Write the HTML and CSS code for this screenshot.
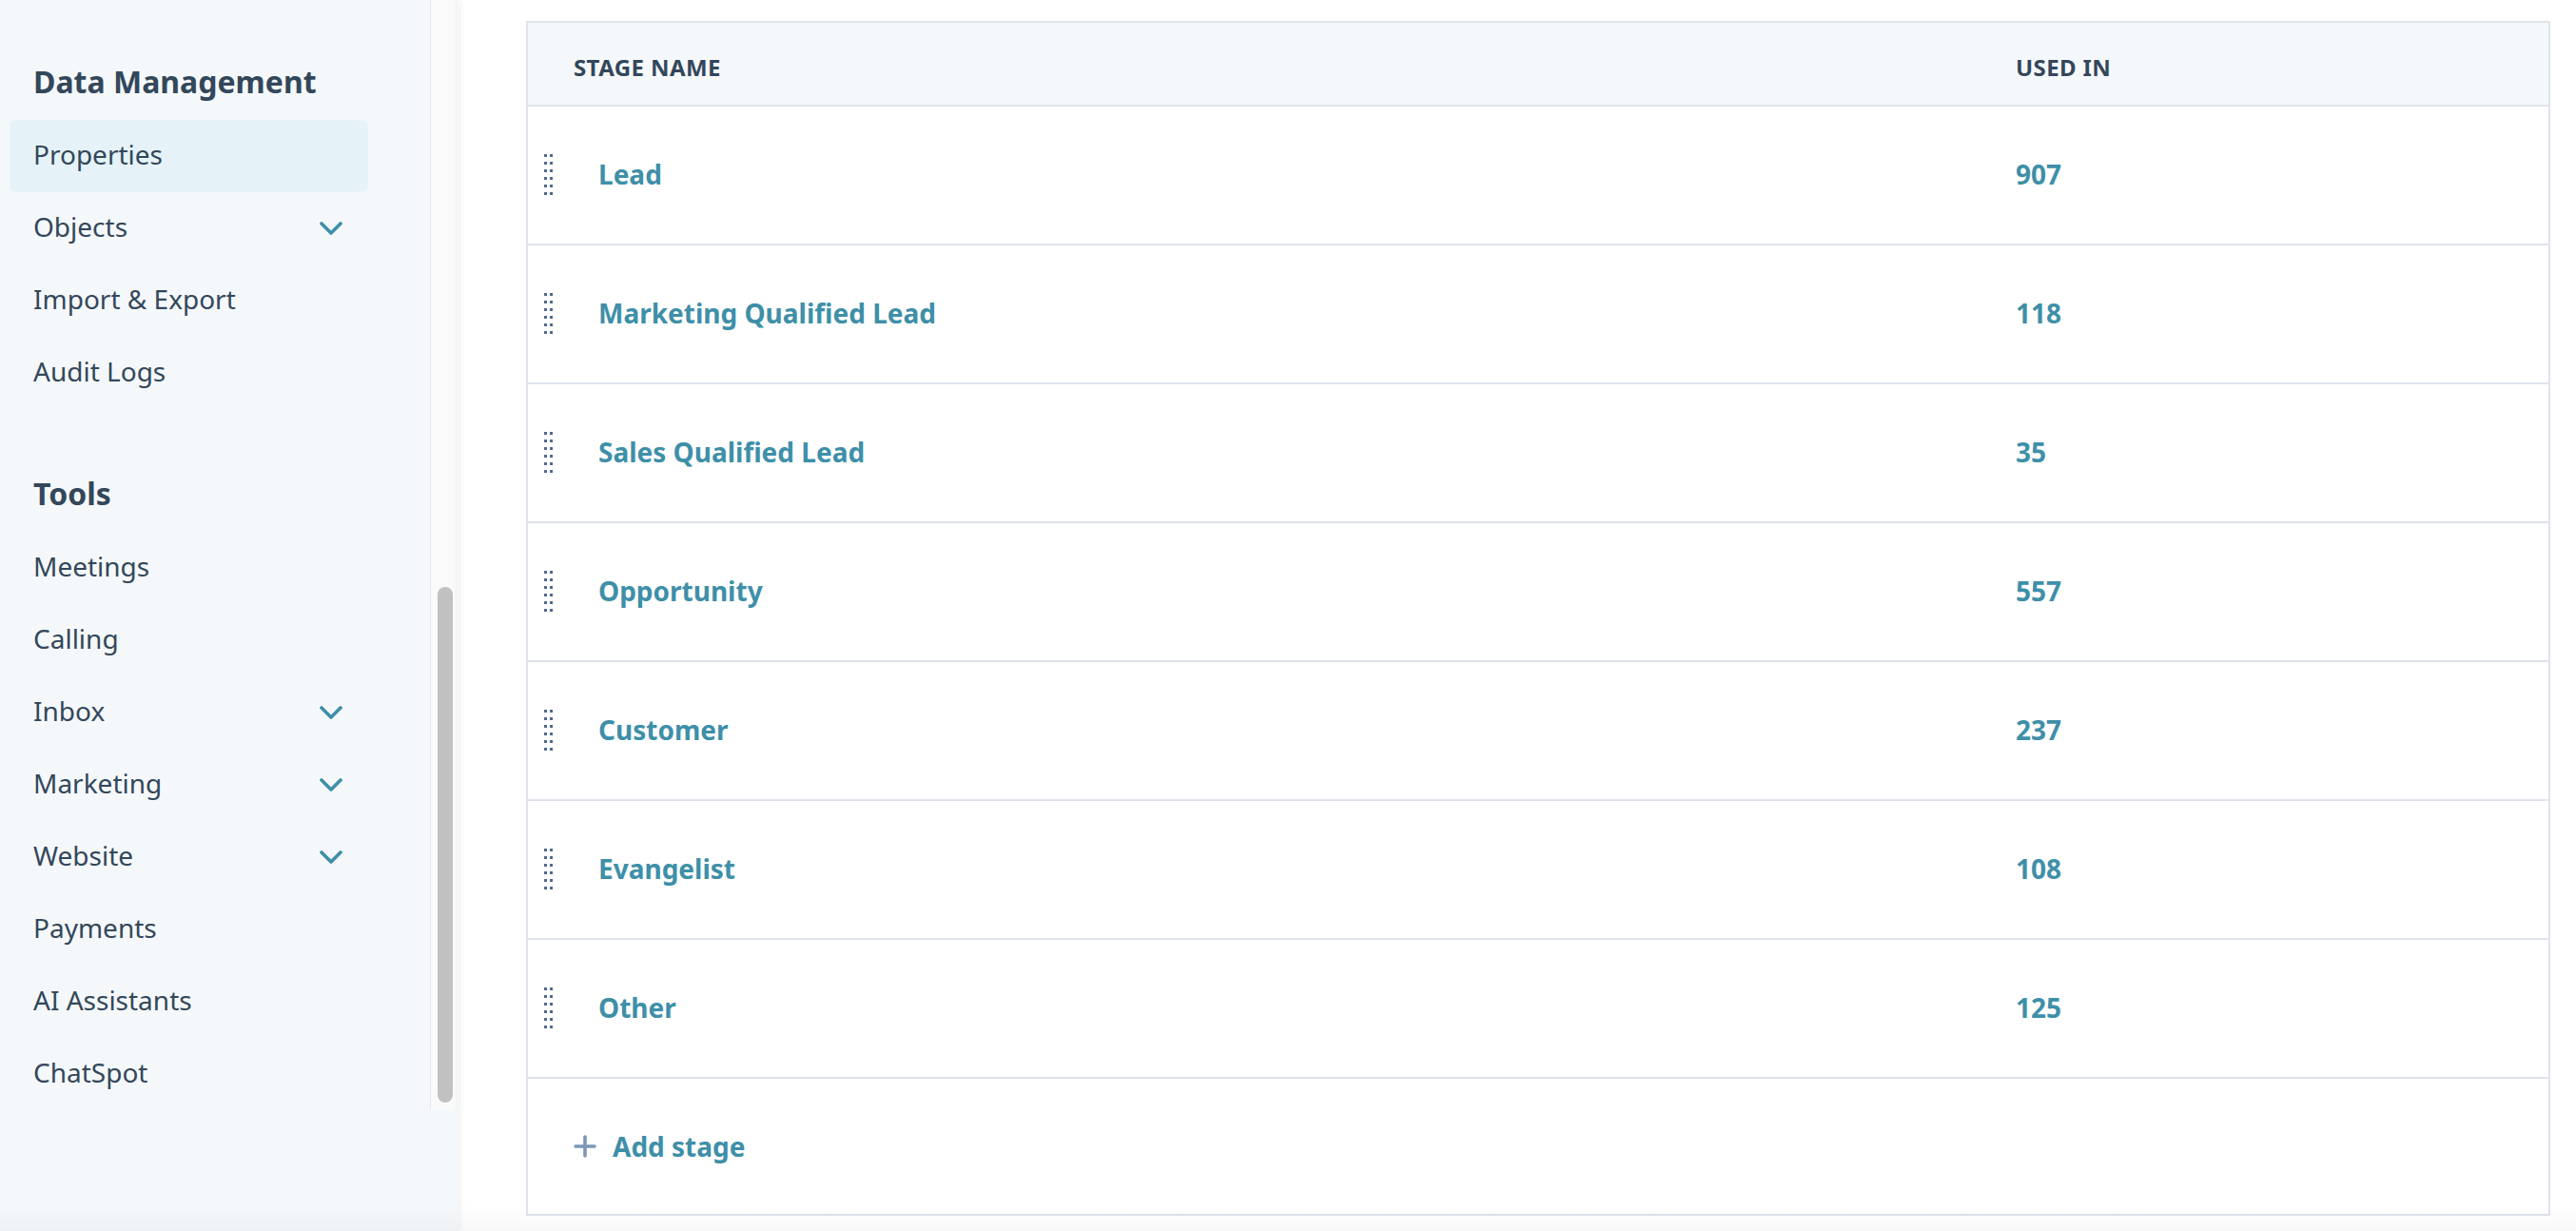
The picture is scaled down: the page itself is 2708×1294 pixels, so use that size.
FILE: index.html
```html
<!DOCTYPE html>
<html lang="en">
<head>
<meta charset="utf-8">
<title>Lifecycle stages</title>
<link rel="stylesheet" href="styles.css">
</head>
<body>
<div class="app">
  <aside class="sidebar">
    <div class="side-scroll">
      <nav class="nav">
        <h3 class="nav-heading">Data Management</h3>
        <ul class="nav-list">
          <li class="nav-item active"><span>Properties</span></li>
          <li class="nav-item"><span>Objects</span><svg class="chev" viewBox="0 0 24 14" width="24" height="14"><polyline points="2,2 12,12 22,2"/></svg></li>
          <li class="nav-item"><span>Import &amp; Export</span></li>
          <li class="nav-item"><span>Audit Logs</span></li>
        </ul>
        <h3 class="nav-heading nav-heading-tools">Tools</h3>
        <ul class="nav-list">
          <li class="nav-item"><span>Meetings</span></li>
          <li class="nav-item"><span>Calling</span></li>
          <li class="nav-item"><span>Inbox</span><svg class="chev" viewBox="0 0 24 14" width="24" height="14"><polyline points="2,2 12,12 22,2"/></svg></li>
          <li class="nav-item"><span>Marketing</span><svg class="chev" viewBox="0 0 24 14" width="24" height="14"><polyline points="2,2 12,12 22,2"/></svg></li>
          <li class="nav-item"><span>Website</span><svg class="chev" viewBox="0 0 24 14" width="24" height="14"><polyline points="2,2 12,12 22,2"/></svg></li>
          <li class="nav-item"><span>Payments</span></li>
          <li class="nav-item"><span>AI Assistants</span></li>
          <li class="nav-item"><span>ChatSpot</span></li>
        </ul>
      </nav>
      <div class="scroll-track"><div class="scroll-thumb"></div></div>
    </div>
  </aside>
  <main class="main">
    <div class="stages">
      <div class="stages-head">
        <div class="head-cell">Stage name</div>
        <div class="head-cell">Used in</div>
      </div>
      <div class="stage-row">
        <div class="name-cell"><svg class="handle" viewBox="0 0 10 44" width="10" height="44"><g><rect x="0" y="0" width="3" height="3"/><rect x="6" y="0" width="3" height="3"/><rect x="0" y="8" width="3" height="3"/><rect x="6" y="8" width="3" height="3"/><rect x="0" y="16" width="3" height="3"/><rect x="6" y="16" width="3" height="3"/><rect x="0" y="24" width="3" height="3"/><rect x="6" y="24" width="3" height="3"/><rect x="0" y="32" width="3" height="3"/><rect x="6" y="32" width="3" height="3"/><rect x="0" y="40" width="3" height="3"/><rect x="6" y="40" width="3" height="3"/></g></svg><span class="stage-link">Lead</span></div>
        <div class="used-cell">907</div>
      </div>
      <div class="stage-row">
        <div class="name-cell"><svg class="handle" viewBox="0 0 10 44" width="10" height="44"><g><rect x="0" y="0" width="3" height="3"/><rect x="6" y="0" width="3" height="3"/><rect x="0" y="8" width="3" height="3"/><rect x="6" y="8" width="3" height="3"/><rect x="0" y="16" width="3" height="3"/><rect x="6" y="16" width="3" height="3"/><rect x="0" y="24" width="3" height="3"/><rect x="6" y="24" width="3" height="3"/><rect x="0" y="32" width="3" height="3"/><rect x="6" y="32" width="3" height="3"/><rect x="0" y="40" width="3" height="3"/><rect x="6" y="40" width="3" height="3"/></g></svg><span class="stage-link">Marketing Qualified Lead</span></div>
        <div class="used-cell">118</div>
      </div>
      <div class="stage-row">
        <div class="name-cell"><svg class="handle" viewBox="0 0 10 44" width="10" height="44"><g><rect x="0" y="0" width="3" height="3"/><rect x="6" y="0" width="3" height="3"/><rect x="0" y="8" width="3" height="3"/><rect x="6" y="8" width="3" height="3"/><rect x="0" y="16" width="3" height="3"/><rect x="6" y="16" width="3" height="3"/><rect x="0" y="24" width="3" height="3"/><rect x="6" y="24" width="3" height="3"/><rect x="0" y="32" width="3" height="3"/><rect x="6" y="32" width="3" height="3"/><rect x="0" y="40" width="3" height="3"/><rect x="6" y="40" width="3" height="3"/></g></svg><span class="stage-link">Sales Qualified Lead</span></div>
        <div class="used-cell">35</div>
      </div>
      <div class="stage-row">
        <div class="name-cell"><svg class="handle" viewBox="0 0 10 44" width="10" height="44"><g><rect x="0" y="0" width="3" height="3"/><rect x="6" y="0" width="3" height="3"/><rect x="0" y="8" width="3" height="3"/><rect x="6" y="8" width="3" height="3"/><rect x="0" y="16" width="3" height="3"/><rect x="6" y="16" width="3" height="3"/><rect x="0" y="24" width="3" height="3"/><rect x="6" y="24" width="3" height="3"/><rect x="0" y="32" width="3" height="3"/><rect x="6" y="32" width="3" height="3"/><rect x="0" y="40" width="3" height="3"/><rect x="6" y="40" width="3" height="3"/></g></svg><span class="stage-link">Opportunity</span></div>
        <div class="used-cell">557</div>
      </div>
      <div class="stage-row">
        <div class="name-cell"><svg class="handle" viewBox="0 0 10 44" width="10" height="44"><g><rect x="0" y="0" width="3" height="3"/><rect x="6" y="0" width="3" height="3"/><rect x="0" y="8" width="3" height="3"/><rect x="6" y="8" width="3" height="3"/><rect x="0" y="16" width="3" height="3"/><rect x="6" y="16" width="3" height="3"/><rect x="0" y="24" width="3" height="3"/><rect x="6" y="24" width="3" height="3"/><rect x="0" y="32" width="3" height="3"/><rect x="6" y="32" width="3" height="3"/><rect x="0" y="40" width="3" height="3"/><rect x="6" y="40" width="3" height="3"/></g></svg><span class="stage-link">Customer</span></div>
        <div class="used-cell">237</div>
      </div>
      <div class="stage-row">
        <div class="name-cell"><svg class="handle" viewBox="0 0 10 44" width="10" height="44"><g><rect x="0" y="0" width="3" height="3"/><rect x="6" y="0" width="3" height="3"/><rect x="0" y="8" width="3" height="3"/><rect x="6" y="8" width="3" height="3"/><rect x="0" y="16" width="3" height="3"/><rect x="6" y="16" width="3" height="3"/><rect x="0" y="24" width="3" height="3"/><rect x="6" y="24" width="3" height="3"/><rect x="0" y="32" width="3" height="3"/><rect x="6" y="32" width="3" height="3"/><rect x="0" y="40" width="3" height="3"/><rect x="6" y="40" width="3" height="3"/></g></svg><span class="stage-link">Evangelist</span></div>
        <div class="used-cell">108</div>
      </div>
      <div class="stage-row">
        <div class="name-cell"><svg class="handle" viewBox="0 0 10 44" width="10" height="44"><g><rect x="0" y="0" width="3" height="3"/><rect x="6" y="0" width="3" height="3"/><rect x="0" y="8" width="3" height="3"/><rect x="6" y="8" width="3" height="3"/><rect x="0" y="16" width="3" height="3"/><rect x="6" y="16" width="3" height="3"/><rect x="0" y="24" width="3" height="3"/><rect x="6" y="24" width="3" height="3"/><rect x="0" y="32" width="3" height="3"/><rect x="6" y="32" width="3" height="3"/><rect x="0" y="40" width="3" height="3"/><rect x="6" y="40" width="3" height="3"/></g></svg><span class="stage-link">Other</span></div>
        <div class="used-cell">125</div>
      </div>
      <div class="add-row">
        <button class="add-btn" type="button"><svg class="plus" viewBox="0 0 24 24" width="24" height="24"><path d="M12 2v20M2 12h20"/></svg><span>Add stage</span></button>
      </div>
    </div>
  </main>
  <div class="bottom-fade"></div>
</div>
</body>
</html>
```

FILE: styles.css
```css
* { box-sizing: border-box; }
html, body { margin: 0; padding: 0; }
body {
  font-family: "Noto Sans", "Open Sans", sans-serif;
  color: #33475b;
  background: #ffffff;
  overflow: hidden;
}
.app {
  display: flex;
  height: 1294px;
  position: relative;
  overflow: hidden;
}
.sidebar {
  width: 482px;
  flex: 0 0 482px;
  background: #f5f8fa;
  position: relative;
  z-index: 1;
  box-shadow: 2px 0 6px rgba(45, 62, 80, 0.07);
}
.side-scroll {
  display: flex;
  height: 1166px;
  overflow: hidden;
}
.nav {
  width: 452px;
  flex: 0 0 452px;
  padding-top: 62px;
}
.nav-heading {
  margin: 0 0 16px;
  padding-left: 35px;
  font-size: 32px;
  line-height: 48px;
  font-weight: 700;
  color: #33475b;
}
.nav-heading-tools { margin-top: 65px; }
.nav-list {
  list-style: none;
  margin: 0;
  padding: 0 65px 0 10px;
}
.nav-item {
  height: 76px;
  display: flex;
  align-items: center;
  justify-content: space-between;
  padding: 0 27px 4px 25px;
  border-radius: 6px;
  font-size: 28px;
  color: #33475b;
}
.nav-item .chev { margin-top: 4px; }
.nav-item.active { background: #e5f3f8; }
.chev {
  fill: none;
  stroke: #3e8fa8;
  stroke-width: 3.6;
  stroke-linecap: round;
  stroke-linejoin: round;
}
.scroll-track {
  width: 28px;
  flex: 0 0 28px;
  background: #fafafa;
  border-left: 1px solid #e6e7e9;
  border-right: 1px solid #eeeff1;
  padding: 617px 0 0 7px;
}
.scroll-thumb {
  width: 16px;
  height: 542px;
  border-radius: 8px;
  background: #c1c1c1;
}
.main {
  flex: 1 1 auto;
  background: #ffffff;
  padding: 22px 27px 0 71px;
}
.stages {
  border: 2px solid #dfe3eb;
}
.stages-head, .stage-row {
  display: grid;
  grid-template-columns: 1516px 1fr;
  border-bottom: 2px solid #dfe3eb;
}
.stages-head {
  height: 88px;
  background: #f5f8fa;
  align-items: center;
}
.head-cell {
  padding-left: 48px;
  padding-top: 6px;
  font-size: 24px;
  font-weight: 700;
  letter-spacing: 0.4px;
  text-transform: uppercase;
  color: #33475b;
}
.stage-row {
  height: 146px;
  align-items: center;
}
.name-cell {
  display: flex;
  align-items: center;
  padding-left: 17px;
}
.handle { fill: #4f6b8c; flex: 0 0 10px; }
.stage-link {
  margin-left: 47px;
  margin-bottom: 3px;
  font-size: 28px;
  font-weight: 700;
  color: #3e8fa8;
}
.used-cell {
  padding-left: 48px;
  padding-bottom: 3px;
  font-size: 28px;
  font-weight: 700;
  color: #3e8fa8;
}
.add-row {
  height: 142px;
  display: flex;
  align-items: center;
  padding-left: 48px;
}
.add-btn {
  display: flex;
  align-items: center;
  gap: 17px;
  border: 0;
  background: none;
  padding: 0;
  font-family: inherit;
  font-size: 28px;
  font-weight: 700;
  color: #3e8fa8;
}
.plus {
  fill: none;
  stroke: #7c98b6;
  stroke-width: 3.6;
  stroke-linecap: round;
}
.bottom-fade {
  position: absolute;
  left: 0;
  right: 0;
  bottom: 0;
  height: 28px;
  background: linear-gradient(to bottom, rgba(45, 62, 80, 0), rgba(45, 62, 80, 0.035));
  pointer-events: none;
  z-index: 2;
}
```
